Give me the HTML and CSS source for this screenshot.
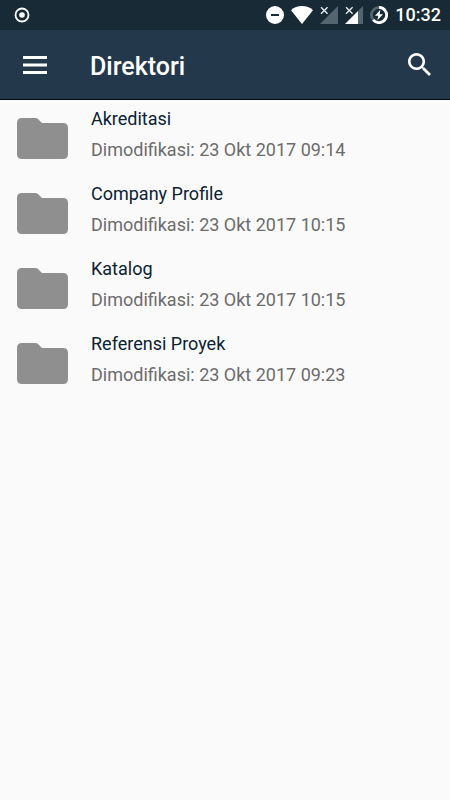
FILE: index.html
```html
<!DOCTYPE html>
<html lang="id">
<head>
<meta charset="utf-8">
<meta name="viewport" content="width=device-width, initial-scale=1">
<title>Direktori</title>
<link rel="stylesheet" href="styles.css">
</head>
<body>
<svg class="defs" aria-hidden="true">
  <symbol id="folder" viewBox="0 0 51 41">
    <path d="M5 0H18Q20 0 21 1L25 5H46Q51 5 51 10V36Q51 41 46 41H5Q0 41 0 36V5Q0 0 5 0Z"/>
  </symbol>
</svg>
<div class="status">
  <svg class="record" viewBox="0 0 16 16" aria-hidden="true"><circle cx="8" cy="8" r="6.5" fill="none" stroke="#fff" stroke-width="1.8"/><circle cx="8" cy="8" r="2.8" fill="#fff"/></svg>
  <div class="indicators">
    <svg class="dnd" viewBox="0 0 18 18" aria-hidden="true"><circle cx="9" cy="9" r="9" fill="#fff"/><path d="M5 9h8" stroke="#172a36" stroke-width="2"/></svg>
    <svg class="wifi" viewBox="0 0 22 18" aria-hidden="true"><path d="M0 4.2Q4.5 0 11 0T22 4.2L11 18Z" fill="#fff"/></svg>
    <svg class="signal" viewBox="0 0 18 18" aria-hidden="true"><path d="M18 0V18H0L9 9Z" fill="#546570"/><path d="M1 1.2l6.6 6.6M7.6 1.2L1 7.8" stroke="#e4eaed" stroke-width="1.4"/></svg>
    <svg class="signal" viewBox="0 0 18 18" aria-hidden="true"><path d="M18 0V18H13V5Z" fill="#546570"/><path d="M13 5V18H0L9 9Z" fill="#fff"/><path d="M1 1.2l6.6 6.6M7.6 1.2L1 7.8" stroke="#e4eaed" stroke-width="1.4"/></svg>
    <svg class="battery" viewBox="0 0 18 18" aria-hidden="true"><circle cx="9" cy="9" r="7.6" fill="none" stroke="#546570" stroke-width="2.8"/><path d="M9 1.4A7.6 7.6 0 1 1 3.2 13.9" fill="none" stroke="#fff" stroke-width="2.8"/><path d="M10.4 3.8L5 9.8H8.2L7.4 14.2L13 8.2H9.6Z" fill="#fff"/></svg>
    <span class="clock">10:32</span>
  </div>
</div>
<header class="bar">
  <button class="icon-button" type="button" aria-label="Menu"><svg class="menu" viewBox="0 0 24 18" aria-hidden="true"><path d="M0 1.5H24M0 9H24M0 16.5H24" stroke="#fff" stroke-width="2.8"/></svg></button>
  <h1 class="title">Direktori</h1>
  <button class="icon-button" type="button" aria-label="Cari"><svg class="search" viewBox="3 3 17.5 17.5" aria-hidden="true"><path fill="#fff" d="M15.5 14h-.79l-.28-.27C15.41 12.59 16 11.11 16 9.5 16 5.91 13.09 3 9.5 3S3 5.91 3 9.5 5.91 16 9.5 16c1.61 0 3.09-.59 4.23-1.57l.27.28v.79l5 4.99L20.49 19l-4.99-5zm-6 0C7.01 14 5 11.99 5 9.5S7.01 5 9.5 5 14 7.01 14 9.5 11.99 14 9.5 14z"/></svg></button>
</header>
<main>
  <ul class="list">
    <li class="row"><svg class="folder" aria-hidden="true"><use href="#folder"/></svg><div><h2 class="name">Akreditasi</h2><p class="date">Dimodifikasi: 23 Okt 2017 09:14</p></div></li>
    <li class="row"><svg class="folder" aria-hidden="true"><use href="#folder"/></svg><div><h2 class="name">Company Profile</h2><p class="date">Dimodifikasi: 23 Okt 2017 10:15</p></div></li>
    <li class="row"><svg class="folder" aria-hidden="true"><use href="#folder"/></svg><div><h2 class="name">Katalog</h2><p class="date">Dimodifikasi: 23 Okt 2017 10:15</p></div></li>
    <li class="row"><svg class="folder" aria-hidden="true"><use href="#folder"/></svg><div><h2 class="name">Referensi Proyek</h2><p class="date">Dimodifikasi: 23 Okt 2017 09:23</p></div></li>
  </ul>
</main>
</body>
</html>
```
FILE: styles.css
```css
* { box-sizing: border-box; margin: 0; padding: 0; }
body { background: #fafafa; font-family: Roboto, "Liberation Sans", sans-serif; }
svg { display: block; flex: none; }
.defs { display: none; }

.status {
  display: flex;
  align-items: center;
  justify-content: space-between;
  height: 30px;
  padding: 0 9px 0 14px;
  background: #172a36;
}
.record { width: 16px; height: 16px; }
.indicators { display: flex; align-items: center; gap: 7px; }
.dnd, .signal, .battery { width: 18px; height: 18px; }
.wifi { width: 22px; height: 18px; }
.clock { color: #fff; font-size: 18px; font-weight: 500; line-height: 30px; }

.bar {
  display: flex;
  align-items: center;
  height: 70px;
  padding: 0 19px 0 23px;
  background: #23394b;
  border-bottom: 1px solid #04090e;
}
.icon-button { background: none; border: 0; cursor: pointer; }
.menu { width: 24px; height: 18px; }
.search { width: 23px; height: 23px; }
.title {
  flex: 1;
  padding: 4px 0 0 43px;
  color: #fff;
  font-size: 25px;
  font-weight: 500;
  line-height: 32px;
}

.list { list-style: none; }
.row {
  display: flex;
  align-items: flex-start;
  gap: 23px;
  padding: 3px 17px 10px;
}
.folder { width: 51px; height: 41px; margin-top: 15px; fill: #8f8f8f; }
.name { color: #0b2232; font-size: 18px; font-weight: 400; line-height: 31px; }
.date { color: #6c6c6c; font-size: 18px; line-height: 31px; }
```
